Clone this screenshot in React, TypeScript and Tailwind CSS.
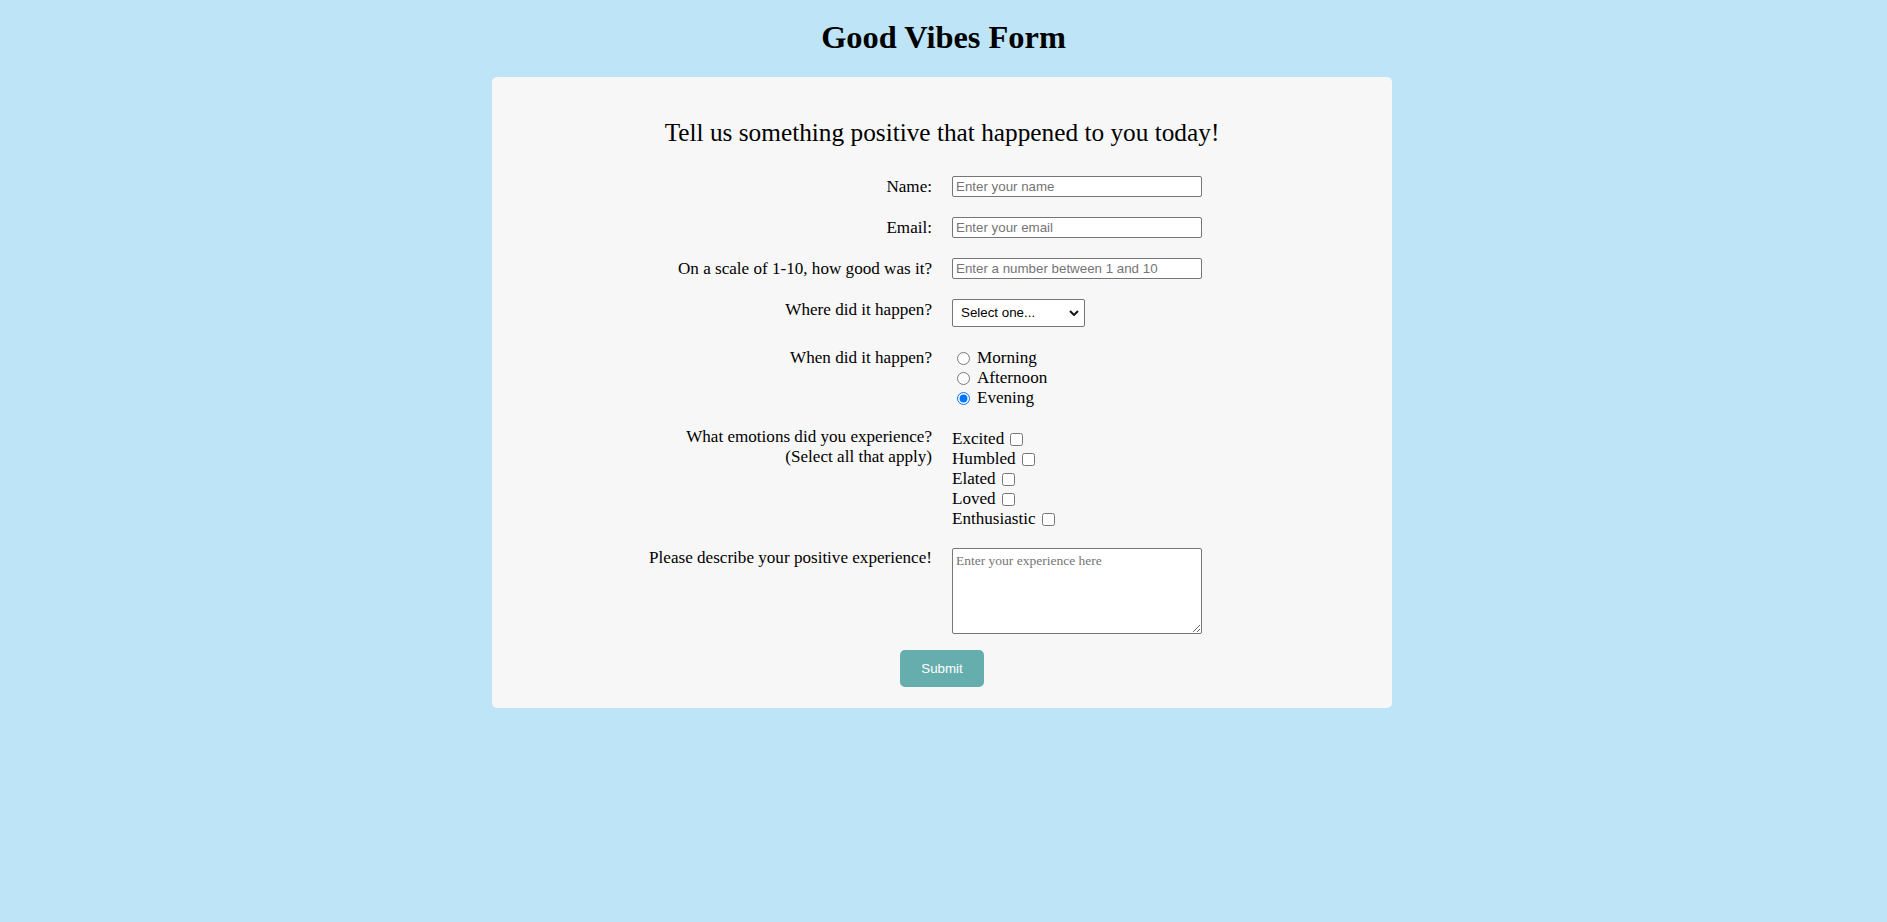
import React from 'react';

const serif = "font-['Liberation_Serif',serif]";
const sans = "font-['Liberation_Sans',Arial,sans-serif]";

interface RowProps {
  label: React.ReactNode;
  className?: string;
  labelClass?: string;
  children: React.ReactNode;
}

const Row: React.FC<RowProps> = ({ label, className = '', labelClass = 'leading-[21px]', children }) => (
  <div className={`flex items-start ${className}`}>
    <div className={`w-[440px] shrink-0 text-right ${labelClass}`}>{label}</div>
    <div className="ml-[20px]">{children}</div>
  </div>
);

const TextInput: React.FC<{ placeholder: string; type?: string }> = ({ placeholder, type = 'text' }) => (
  <input
    type={type}
    placeholder={placeholder}
    className={`${sans} block h-[21px] w-[250px] rounded-[2px] border border-[#767676] bg-white pl-[3px] text-[13.33px] text-black placeholder:text-[#757575]`}
  />
);

const times = ['Morning', 'Afternoon', 'Evening'];
const emotions = ['Excited', 'Humbled', 'Elated', 'Loved', 'Enthusiastic'];

export default function App() {
  return (
    <div className={`${serif} min-h-screen bg-[#bee4f7] pt-[18px] text-black`}>
      <h1 className="text-center text-[32.4px] font-bold leading-[38px]">Good Vibes Form</h1>

      <div className="mt-[21px] flex justify-center pr-[3px]">
        <div className="w-[900px] rounded-[5px] bg-[#f7f7f7] pt-[40px] pb-[21px]">
          <h2 className="text-center text-[25.3px] leading-[30px]">
            Tell us something positive that happened to you today!
          </h2>

          <form className="mt-[29px] text-[17.1px]" onSubmit={e => e.preventDefault()}>
            <Row label="Name:">
              <TextInput placeholder="Enter your name" />
            </Row>
            <Row label="Email:" className="mt-[20px]">
              <TextInput placeholder="Enter your email" type="email" />
            </Row>
            <Row label="On a scale of 1-10, how good was it?" className="mt-[20px]">
              <TextInput placeholder="Enter a number between 1 and 10" />
            </Row>
            <Row label="Where did it happen?" className="mt-[20px]">
              <div className="relative w-[133px]">
                <select
                  defaultValue=""
                  className={`${sans} block h-[28px] w-[133px] appearance-none rounded-[2px] border border-[#767676] bg-white pl-[8px] text-[13.33px] text-black`}
                >
                  <option value="">Select one...</option>
                  <option>Home</option>
                  <option>Work</option>
                  <option>School</option>
                  <option>Outside</option>
                </select>
                <svg
                  viewBox="0 0 10 6"
                  className="pointer-events-none absolute top-[11px] right-[6px] h-[6px] w-[10px]"
                >
                  <path d="M1 1 L5 5 L9 1" fill="none" stroke="#111" strokeWidth="1.9" />
                </svg>
              </div>
            </Row>

            <Row label="When did it happen?" className="mt-[20px]">
              <div className="pt-[1px]">
                {times.map(t => (
                  <label key={t} className="flex h-[20px] items-center leading-[20px]">
                    <input
                      type="radio"
                      name="when"
                      defaultChecked={t === 'Evening'}
                      className="ml-[5px] h-[13px] w-[13px]"
                    />
                    <span className="ml-[7px]">{t}</span>
                  </label>
                ))}
              </div>
            </Row>

            <Row
              label={
                <>
                  What emotions did you experience?
                  <br />
                  (Select all that apply)
                </>
              }
              labelClass="leading-[20px]"
              className="mt-[19px]"
            >
              <div className="pt-[2px]">
                {emotions.map(em => (
                  <label key={em} className="flex h-[20px] items-center leading-[20px]">
                    <span>{em}</span>
                    <input type="checkbox" className="ml-[6px] h-[13px] w-[13px]" />
                  </label>
                ))}
              </div>
            </Row>

            <Row label="Please describe your positive experience!" className="mt-[18px]">
              <textarea
                placeholder="Enter your experience here"
                className={`${serif} mt-[1px] block h-[86px] w-[250px] rounded-[2px] border border-[#767676] bg-white px-[3px] py-[2px] text-[13.5px] text-black placeholder:text-[#757575]`}
              />
            </Row>

            <div className="mt-[16px] flex justify-center">
              <button
                type="submit"
                className={`${sans} h-[37px] w-[84px] rounded-[5px] bg-[#66adad] text-[13.33px] text-white`}
              >
                Submit
              </button>
            </div>
          </form>
        </div>
      </div>
    </div>
  );
}
